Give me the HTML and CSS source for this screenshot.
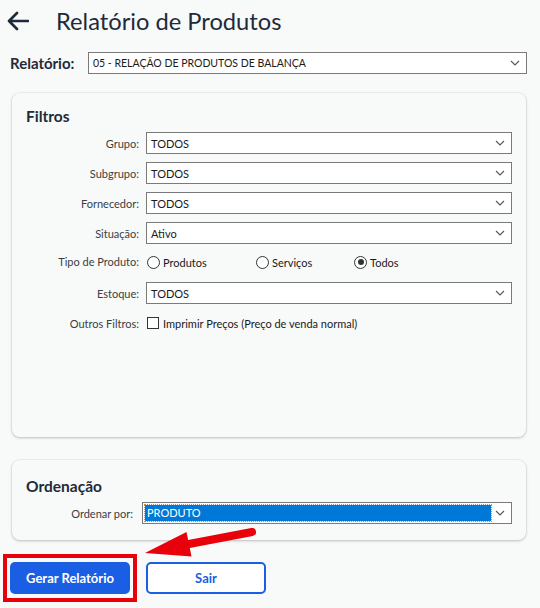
FILE: index.html
```html
<!DOCTYPE html>
<html lang="pt">
<head>
<meta charset="utf-8">
<title>Relatório de Produtos</title>
<link rel="stylesheet" href="styles.css">
</head>
<body>
<div class="page">
  <header class="header">
    <svg class="back" width="22" height="20" viewBox="0 0 22 20">
      <path d="M10 2 L2 10 L10 18 M2 10 H21" fill="none" stroke="#1e2b3a" stroke-width="2.6" stroke-linecap="round" stroke-linejoin="round"/>
    </svg>
    <h1 class="title">Relatório de Produtos</h1>
  </header>

  <div class="report-row">
    <span class="report-label">Relatório:</span>
    <div class="select report-select"><span class="select-text">05 - RELAÇÃO DE PRODUTOS DE BALANÇA</span><svg class="chev" width="10" height="6" viewBox="0 0 10 6"><path d="M1 1 L5 5 L9 1" fill="none" stroke="#555" stroke-width="1.1"/></svg></div>
  </div>

  <section class="card card-filters">
    <h2 class="card-title">Filtros</h2>
    <div class="form-grid">
      <span class="lbl">Grupo:</span>
      <div class="select"><span class="select-text">TODOS</span><svg class="chev" width="10" height="6" viewBox="0 0 10 6"><path d="M1 1 L5 5 L9 1" fill="none" stroke="#555" stroke-width="1.1"/></svg></div>

      <span class="lbl">Subgrupo:</span>
      <div class="select"><span class="select-text">TODOS</span><svg class="chev" width="10" height="6" viewBox="0 0 10 6"><path d="M1 1 L5 5 L9 1" fill="none" stroke="#555" stroke-width="1.1"/></svg></div>

      <span class="lbl">Fornecedor:</span>
      <div class="select"><span class="select-text">TODOS</span><svg class="chev" width="10" height="6" viewBox="0 0 10 6"><path d="M1 1 L5 5 L9 1" fill="none" stroke="#555" stroke-width="1.1"/></svg></div>

      <span class="lbl">Situação:</span>
      <div class="select"><span class="select-text">Ativo</span><svg class="chev" width="10" height="6" viewBox="0 0 10 6"><path d="M1 1 L5 5 L9 1" fill="none" stroke="#555" stroke-width="1.1"/></svg></div>

      <span class="lbl lbl-top">Tipo de Produto:</span>
      <div class="radios">
        <label class="opt opt-short"><span class="radio"></span>Produtos</label>
        <label class="opt opt-short"><span class="radio"></span>Serviços</label>
        <label class="opt opt-short"><span class="radio checked"></span>Todos</label>
      </div>

      <span class="lbl">Estoque:</span>
      <div class="select"><span class="select-text">TODOS</span><svg class="chev" width="10" height="6" viewBox="0 0 10 6"><path d="M1 1 L5 5 L9 1" fill="none" stroke="#555" stroke-width="1.1"/></svg></div>

      <span class="lbl">Outros Filtros:</span>
      <label class="opt"><span class="checkbox"></span>Imprimir Preços (Preço de venda normal)</label>
    </div>
  </section>

  <section class="card card-order">
    <h2 class="card-title">Ordenação</h2>
    <div class="order-grid">
      <span class="lbl">Ordenar por:</span>
      <div class="select focused"><span class="select-highlight">PRODUTO</span><svg class="chev" width="10" height="6" viewBox="0 0 10 6"><path d="M1 1 L5 5 L9 1" fill="none" stroke="#555" stroke-width="1.1"/></svg></div>
    </div>
  </section>

  <div class="actions">
    <div class="highlight-box">
      <button class="btn btn-primary">Gerar Relatório</button>
    </div>
    <button class="btn btn-outline">Sair</button>
  </div>

  <svg class="annot-arrow" width="540" height="608" viewBox="0 0 540 608">
    <line x1="189" y1="544" x2="252" y2="532" stroke="#e8000b" stroke-width="8" stroke-linecap="round"/>
    <polygon points="145,553 186.5,532 191.5,556.5" fill="#e8000b"/>
  </svg>
</div>
</body>
</html>
```

FILE: styles.css
```css
* { box-sizing: border-box; }

html, body {
  margin: 0;
  padding: 0;
  background: #f8f9f9;
}

body {
  font-family: Lato, "Noto Sans", "Liberation Sans", sans-serif;
  color: #2a2f35;
  width: 540px;
  height: 608px;
  overflow: hidden;
}

.page {
  position: relative;
  width: 540px;
  height: 608px;
}

.header {
  display: flex;
  align-items: center;
  height: 42px;
  padding-left: 7px;
}

.back {
  display: block;
}

.title {
  margin: 0 0 0 27px;
  font-size: 23.7px;
  font-weight: 400;
  color: #1e2b3a;
}

.report-row {
  display: flex;
  align-items: center;
  margin: 10px 13px 0 10px;
  gap: 8px;
}

.report-label {
  font-size: 15px;
  font-weight: 700;
  color: #1e2b3a;
  width: 70px;
}

.select {
  position: relative;
  display: flex;
  align-items: center;
  height: 22px;
  background: #fff;
  border: 1px solid #7a7a7a;
  font-size: 11px;
  color: #1a1a1a;
  padding-left: 4px;
}

.report-select {
  flex: 1;
  font-size: 10.5px;
}

.select-text {
  flex: 1;
  white-space: nowrap;
}

.chev {
  position: absolute;
  right: 6px;
  top: 7px;
}

.card {
  margin-left: 12px;
  width: 514px;
  background: #f8f9f9;
  border-radius: 8px;
  box-shadow: 0 1px 3px rgba(0, 0, 0, 0.22), 0 0 0 1px rgba(0, 0, 0, 0.03);
  padding: 13px 14px 16px 14px;
}

.card-filters {
  margin-top: 19px;
  height: 344px;
}

.card-title {
  margin: 0;
  font-size: 15.5px;
  font-weight: 700;
  color: #1e2b3a;
  line-height: 20px;
}

.form-grid {
  display: grid;
  grid-template-columns: 113px 1fr;
  column-gap: 7px;
  row-gap: 8px;
  margin-top: 6px;
}

.lbl {
  font-size: 11px;
  color: #3a3f45;
  text-align: right;
  align-self: center;
  white-space: nowrap;
}

.lbl-top {
  align-self: start;
  line-height: 20px;
}

.radios {
  display: grid;
  grid-template-columns: 109px 98px auto;
  height: 22px;
  align-items: start;
}

.opt {
  display: flex;
  align-items: center;
  font-size: 11px;
  color: #1a1a1a;
  height: 22px;
  white-space: nowrap;
}

.opt-short {
  height: 20px;
}

.radio {
  width: 13px;
  height: 13px;
  border: 1px solid #333;
  border-radius: 50%;
  background: #fff;
  margin-left: 1px;
  margin-right: 3px;
  position: relative;
}

.radio.checked::after {
  content: "";
  position: absolute;
  left: 2.5px;
  top: 2.5px;
  width: 6px;
  height: 6px;
  border-radius: 50%;
  background: #333;
}

.checkbox {
  width: 12px;
  height: 12px;
  border: 1px solid #333;
  background: #fff;
  margin-left: 1px;
  margin-right: 4px;
}

.card-order {
  margin-top: 23px;
  padding-top: 16px;
  padding-bottom: 16px;
}

.order-grid {
  display: grid;
  grid-template-columns: 107px 1fr;
  column-gap: 9px;
  margin-top: 6px;
}

.select.focused {
  padding: 2px 20px 2px 2px;
}

.select-highlight {
  flex: 1;
  height: 16px;
  background: #0078d7;
  color: #fff;
  outline: 1px dotted #d88a1a;
  line-height: 16px;
  padding-left: 2px;
  font-size: 11px;
}

.actions {
  display: flex;
  align-items: center;
  margin: 14px 0 0 3px;
  gap: 9px;
}

.highlight-box {
  border: 4px solid #e8000b;
  padding: 4px 3px;
}

.btn {
  display: block;
  width: 120px;
  height: 32px;
  border-radius: 5px;
  font-family: Lato, "Noto Sans", "Liberation Sans", sans-serif;
  font-size: 13px;
  font-weight: 700;
  cursor: pointer;
}

.btn-primary {
  background: #1a5fe3;
  color: #fff;
  border: none;
}

.btn-outline {
  background: #fff;
  color: #1a5fe3;
  border: 2px solid #1a5fe3;
}

.annot-arrow {
  position: absolute;
  left: 0;
  top: 0;
  pointer-events: none;
}
```
